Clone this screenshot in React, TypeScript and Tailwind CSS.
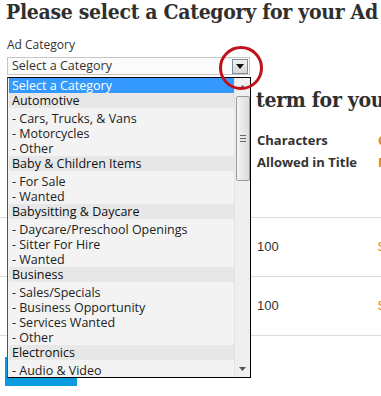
import React from 'react';

type Row = { label: string; group?: boolean; selected?: boolean };

const rows: Row[] = [
    { label: 'Select a Category', selected: true },
    { label: 'Automotive', group: true },
    { label: '- Cars, Trucks, & Vans' },
    { label: '- Motorcycles' },
    { label: '- Other' },
    { label: 'Baby & Children Items', group: true },
    { label: '- For Sale' },
    { label: '- Wanted' },
    { label: 'Babysitting & Daycare', group: true },
    { label: '- Daycare/Preschool Openings' },
    { label: '- Sitter For Hire' },
    { label: '- Wanted' },
    { label: 'Business', group: true },
    { label: '- Sales/Specials' },
    { label: '- Business Opportunity' },
    { label: '- Services Wanted' },
    { label: '- Other' },
    { label: 'Electronics', group: true },
    { label: '- Audio & Video' },
];

const slab = "font-['DejaVu_Serif_Condensed','DejaVu_Serif',serif] font-bold text-[#2f2f2f]";

const App = () => {
    return (
        <div className="relative w-[381px] h-[396px] overflow-hidden bg-white font-['Open_Sans',sans-serif] text-[#333]">
            {/* Page */}
            <h1 className={`${slab} pl-[6px] pt-[1px] text-[21px] leading-[22px] tracking-[-0.3px] whitespace-nowrap`}>
                Please select a Category for your Ad
            </h1>

            <div className="pl-[7px] mt-[14px] text-[12px] leading-[16px]">Ad Category</div>

            <div className="ml-[7px] mt-[4px] w-[243px] h-[18px] border border-[#c6c6c6] bg-[#fbfbfb] flex items-center justify-between">
                <span className="pl-[4px] text-[12.5px] leading-[16px]">Select a Category</span>
                <span className="mr-[1px] w-[16px] h-[15px] border border-[#7d8ea3] bg-gradient-to-b from-[#f0f0f0] to-[#d6d6d6] flex items-center justify-center">
                    <svg width="8" height="5" viewBox="0 0 8 5"><path d="M0 0h8L4 5z" fill="#111" /></svg>
                </span>
            </div>

            {/* Second heading, mostly under the open list */}
            <h2 className={`${slab} mt-[13px] flex text-[21px] leading-[24px] tracking-[-0.3px] whitespace-nowrap`}>
                <span className="w-[256px] shrink-0" />
                term for your Ad
            </h2>

            {/* Table behind the dropdown */}
            <div className="mt-[17px] grid grid-cols-[257px_121px_100px] text-[13px]">
                <div />
                <div className="font-bold leading-[22px]">Characters<br />Allowed in Title</div>
                <div className="font-bold leading-[22px] text-[#e8870f]">Cost<br />Per Ad</div>
                <div className="col-span-3 h-[45px] border-b border-[#dcdcdc]" />
                <div className="h-[58px]" />
                <div className="h-[58px] flex items-center font-['Liberation_Sans',sans-serif]">100</div>
                <div className="h-[58px] flex items-center text-[#e8870f] font-['Liberation_Sans',sans-serif]">$1.00</div>
                <div className="col-span-3 border-b border-[#dcdcdc]" />
                <div className="h-[58px]" />
                <div className="h-[58px] flex items-center font-['Liberation_Sans',sans-serif]">100</div>
                <div className="h-[58px] flex items-center text-[#e8870f] font-['Liberation_Sans',sans-serif]">$1.50</div>
                <div className="col-span-3 border-b border-[#dcdcdc]" />
            </div>

            <div className="ml-[5px] mt-[21px] w-[72px] h-[29px] bg-[#0a9ae0]" />

            {/* Open dropdown list */}
            <div className="absolute left-[7px] top-[77px] w-[244px] h-[301px] border border-black border-l-[#555] bg-[#f3f3f3] flex">
                <div className="flex-1 pl-[1px] overflow-hidden text-[12.5px] leading-[15px] whitespace-nowrap">
                    {rows.map((r, i) => (
                        <div
                            key={i}
                            className={
                                r.selected
                                    ? 'h-[15px] pl-[3px] bg-[#3399ff] text-white'
                                    : r.group
                                    ? 'h-[15px] mb-[3px] pl-[3px] bg-[#e7e7e7] text-[#111]'
                                    : 'h-[15px] pl-[3px] text-[#222]'
                            }
                        >
                            {r.label}
                        </div>
                    ))}
                </div>
                {/* Scrollbar */}
                <div className="w-[16px] border-l border-[#e2e2e2] bg-[#efefef] flex flex-col items-center">
                    <div className="h-[18px] flex items-center justify-center">
                        <svg width="7" height="4" viewBox="0 0 7 4"><path d="M0 4h7L3.5 0z" fill="#555" /></svg>
                    </div>
                    <div className="w-[14px] h-[85px] rounded-[2px] border border-[#9a9a9a] bg-gradient-to-r from-[#f4f4f4] to-[#dcdcdc] flex flex-col items-center justify-center gap-[2px]">
                        <span className="w-[6px] h-px bg-[#666]" />
                        <span className="w-[6px] h-px bg-[#666]" />
                        <span className="w-[6px] h-px bg-[#666]" />
                    </div>
                    <div className="flex-1" />
                    <div className="h-[17px] flex items-center justify-center">
                        <svg width="7" height="4" viewBox="0 0 7 4"><path d="M0 0h7L3.5 4z" fill="#555" /></svg>
                    </div>
                </div>
            </div>

            {/* Red highlight circle */}
            <div className="absolute left-[219px] top-[46px] w-[44px] h-[44px] rounded-full border-[3px] border-[#c0121d]" />
        </div>
    );
};

export default App;
